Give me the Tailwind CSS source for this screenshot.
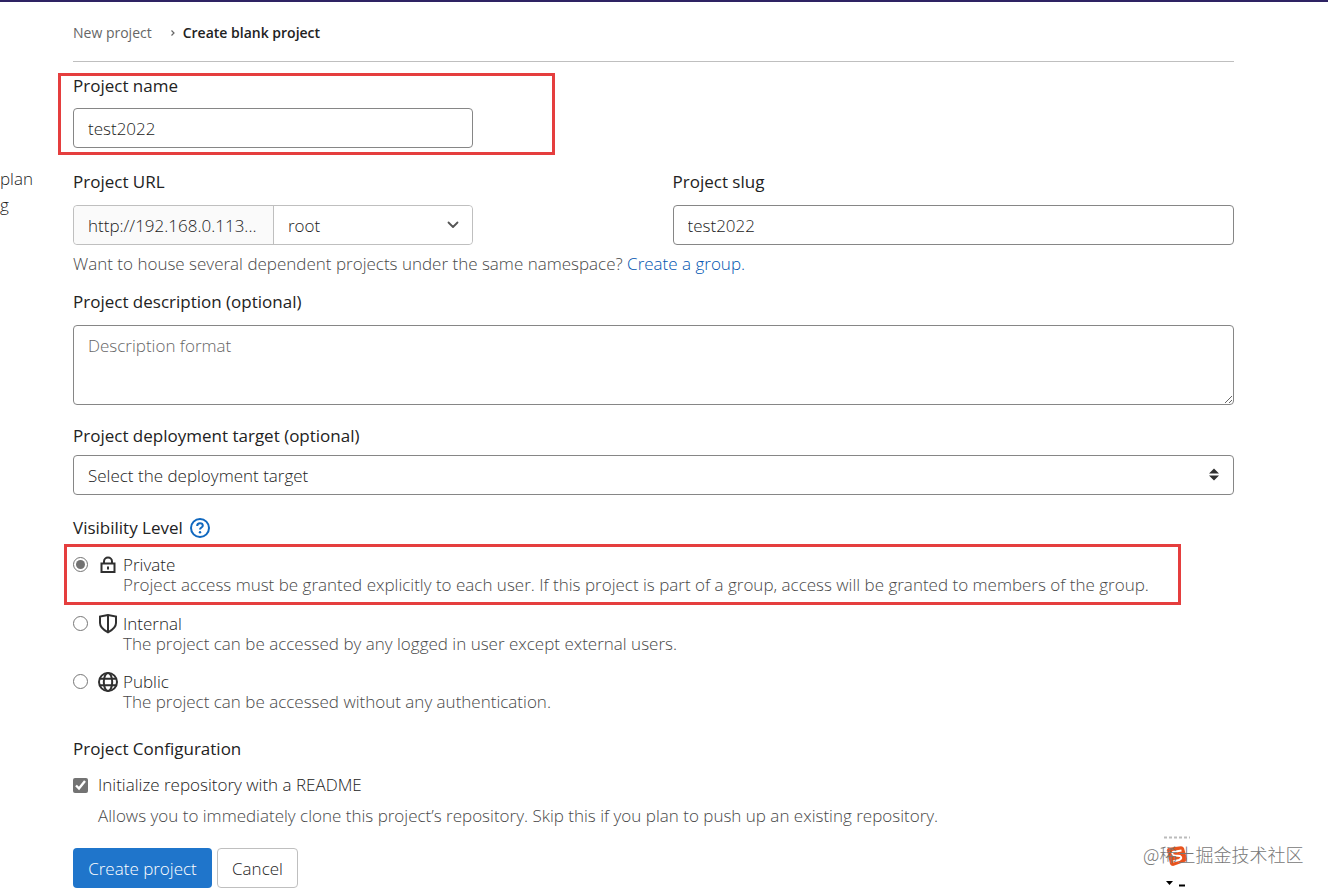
<!DOCTYPE html>
<html lang="en">
  <head>
    <meta charset="UTF-8" />
    <meta name="viewport" content="width=device-width, initial-scale=1" />
    <title>Create blank project</title>
    <script src="https://cdn.jsdelivr.net/npm/@tailwindcss/browser@4"></script>
  </head>
  <body
    class="relative min-h-screen overflow-x-hidden bg-white font-['Open_Sans',sans-serif] text-[17px] leading-6 font-light text-[#222]"
  >
    <header class="h-[2px] bg-[#2e2363]"></header>

    <div class="flex">
      <!-- tail of the intro column, scrolled off to the left -->
      <aside class="w-[73px] shrink-0 pt-[164px] leading-[26px]">
        <p>plan</p>
        <p>g</p>
      </aside>

      <main class="min-w-0 flex-1 pr-[94px]">
        <nav
          aria-label="Breadcrumb"
          class="flex h-[60px] items-center border-b border-[#bfbfbf] pt-[2px] text-sm"
        >
          <a href="#" class="font-normal text-[#666]">New project</a>
          <svg class="mr-[7px] ml-[18px] h-2 w-[6px]" viewBox="0 0 6 8" fill="none" stroke="#666" stroke-width="1.2">
            <path d="M1.5 1.5 4 4 1.5 6.5" />
          </svg>
          <a href="#" class="font-semibold">Create blank project</a>
        </nav>

        <form>
          <div class="mt-[11px] -ml-[15px] h-[82px] w-[497px] border-[3px] border-[#e53e3e] pl-3">
            <label for="name" class="-mt-[2px] block font-medium">Project name</label>
            <input
              id="name"
              type="text"
              value="test2022"
              class="mt-[10px] block h-10 w-[400px] rounded border border-[#868686] px-[14px]"
            />
          </div>

          <div class="mt-[15px] grid grid-cols-2 gap-[38px]">
            <div>
              <label for="namespace" class="block font-medium">Project URL</label>
              <div class="mt-[11px] flex h-10 w-[400px] rounded border border-[#bfbfbf]">
                <div class="w-[200px] rounded-l border-r border-[#bfbfbf] bg-[#fafafa] pl-[14px] leading-[40px] whitespace-nowrap">
                  http://192.168.0.113...
                </div>
                <div class="relative flex-1">
                  <select id="namespace" class="h-full w-full appearance-none rounded-r bg-white px-[14px] pt-px">
                    <option>root</option>
                  </select>
                  <svg
                    class="pointer-events-none absolute top-[15px] right-[13px] h-2 w-3"
                    viewBox="0 0 12 8"
                    fill="none"
                    stroke="#555"
                    stroke-width="1.8"
                    stroke-linecap="round"
                    stroke-linejoin="round"
                  >
                    <path d="M1.5 1.5 6 6l4.500-4.500" />
                  </svg>
                </div>
              </div>
            </div>
            <div>
              <label for="slug" class="block font-medium">Project slug</label>
              <input
                id="slug"
                type="text"
                value="test2022"
                class="mt-[11px] block h-10 w-full rounded border border-[#868686] px-[14px]"
              />
            </div>
          </div>
          <p class="mt-[7px] text-[#484848]">
            Want to house several dependent projects under the same namespace?
            <a href="#" class="text-[#0055b0]">Create a group.</a>
          </p>

          <label for="description" class="mt-[14px] block font-medium">Project description (optional)</label>
          <textarea
            id="description"
            placeholder="Description format"
            class="mt-[11px] block h-20 w-full rounded border border-[#868686] px-[14px] py-2 placeholder:text-[#666]"
          ></textarea>

          <label for="target" class="mt-[19px] block font-medium">Project deployment target (optional)</label>
          <div class="relative mt-[7px]">
            <select
              id="target"
              class="block h-10 w-full appearance-none rounded border border-[#868686] bg-white px-[14px] pt-px"
            >
              <option>Select the deployment target</option>
            </select>
            <svg
              class="pointer-events-none absolute top-[13px] right-[14px] h-[13px] w-3"
              viewBox="0 0 12 13"
              fill="#303030"
            >
              <path d="M1 5.500 6 .5l5 5zM1 7.500h10l-5 5z" />
            </svg>
          </div>

          <fieldset class="mt-[21px]">
            <legend class="flex items-center gap-[7px] font-medium">
              Visibility Level
              <a href="#" aria-label="Help">
                <svg class="h-5 w-5" viewBox="0 0 20 20" fill="none" stroke="#1068bf" stroke-width="2">
                  <circle cx="10" cy="10" r="9" />
                  <path d="M7.200 8c0-1.800 1.200-2.700 2.800-2.700s2.800 1 2.800 2.400c0 1.800-2.800 1.900-2.800 3.800" />
                  <circle cx="10" cy="14.200" r="1.200" fill="#1068bf" stroke="none" />
                </svg>
              </a>
            </legend>

            <div
              class="mt-1 -ml-[9px] flex h-[61px] w-[1117px] items-start border-[3px] border-[#e53e3e] pt-2 pl-[6px] leading-5"
            >
              <input id="private" type="radio" name="visibility" checked class="mt-[2px] h-[15px] w-[15px] shrink-0 accent-[#737373]" />
              <svg class="ml-[10px] h-5 w-5 shrink-0" viewBox="0 0 20 20" fill="none" stroke="#303030" stroke-width="2">
                <path d="M3.500 8.500h13v8.500h-13zM6 8.500V6.500a4 4 0 0 1 8 0v2" />
                <path d="M10 11.500v3" />
              </svg>
              <label for="private" class="ml-[5px] whitespace-nowrap">
                Private
                <span class="block text-[#484848]">Project access must be granted explicitly to each user. If this project is part of a group, access will be granted to members of the group.</span>
              </label>
            </div>

            <div class="mt-[9px] flex items-start leading-5">
              <input id="internal" type="radio" name="visibility" class="mt-[2px] h-[15px] w-[15px] shrink-0 accent-[#737373]" />
              <svg class="ml-[10px] h-5 w-5 shrink-0" viewBox="0 0 20 20" fill="none" stroke="#303030" stroke-width="2">
                <path d="M10 1 2 2.500v6.500c0 4 3.500 7 8 9.300 4.500-2.300 8-5.300 8-9.300V2.500zM10 1v17" />
              </svg>
              <label for="internal" class="ml-[5px]">
                Internal
                <span class="block text-[#484848]">The project can be accessed by any logged in user except external users.</span>
              </label>
            </div>

            <div class="mt-[18px] flex items-start leading-5">
              <input id="public" type="radio" name="visibility" class="mt-[2px] h-[15px] w-[15px] shrink-0 accent-[#737373]" />
              <svg class="ml-[10px] h-5 w-5 shrink-0" viewBox="0 0 20 20" fill="none" stroke="#303030" stroke-width="2">
                <circle cx="10" cy="10" r="9" />
                <ellipse cx="10" cy="10" rx="4.200" ry="9" />
                <path d="M2 6.800h16M2 13.200h16" />
              </svg>
              <label for="public" class="ml-[5px]">
                Public
                <span class="block text-[#484848]">The project can be accessed without any authentication.</span>
              </label>
            </div>
          </fieldset>

          <fieldset class="mt-[25px]">
            <legend class="font-medium">Project Configuration</legend>
            <div class="mt-3 flex items-center gap-[10px]">
              <input id="readme" type="checkbox" checked class="h-[15px] w-[15px] accent-[#737373]" />
              <label for="readme">Initialize repository with a README</label>
            </div>
            <p class="mt-[7px] ml-[25px] text-[#484848]">
              Allows you to immediately clone this project’s repository. Skip this if you plan to push up an existing repository.
            </p>
          </fieldset>

          <div class="mt-5 flex gap-[5px]">
            <button type="submit" class="h-10 w-[139px] rounded bg-[#1f75cb] pt-px whitespace-nowrap text-white">
              Create project
            </button>
            <button type="button" class="h-10 w-[81px] rounded border border-[#bfbfbf] bg-white pt-px">Cancel</button>
          </div>
        </form>
      </main>
    </div>

    <!-- watermark with the input method badge -->
    <div class="pointer-events-none absolute top-[836px] right-[25px] h-[54px] w-[160px]">
      <svg class="absolute top-0 left-[20px] h-[52px] w-7" viewBox="0 0 28 52" fill="none">
        <path d="M1 1.500h26" stroke="#bbb" stroke-width="2" stroke-dasharray="3 2" />
        <path d="M4 14q0-2 2-2.300l12-1.400q2 0 3 1.700l3 11q0 2-2 2.800L10 30q-2 0-3-2z" fill="#e9531d" />
        <path d="M18.500 14.500 10 16q-2 3 2 3.500l5 .5q3 2-1 4l-6 1.500" stroke="#fff" stroke-width="2" />
        <path d="M3 45h7l-3.500 4z" fill="#000" />
        <path d="M16 49.500h6" stroke="#000" stroke-width="2" />
      </svg>
      <p class="relative mt-[6px] font-['Noto_Sans_CJK_SC',sans-serif] text-[18px] font-light whitespace-nowrap text-[#777]">@稀土掘金技术社区</p>
    </div>
  </body>
</html>
